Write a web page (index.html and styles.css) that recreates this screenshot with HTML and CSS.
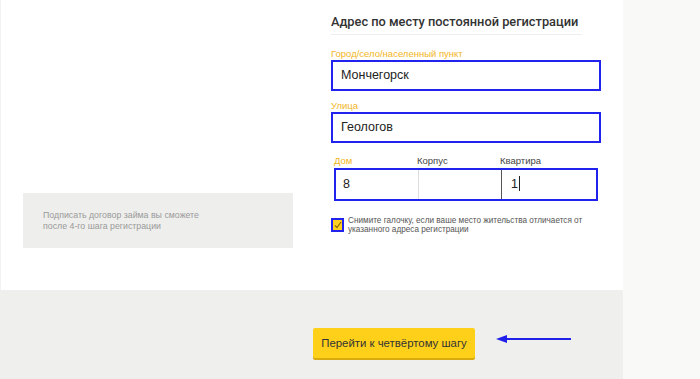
FILE: index.html
```html
<!DOCTYPE html>
<html lang="ru">
<head>
  <meta charset="UTF-8">
  <meta name="viewport" content="width=device-width, initial-scale=1.0">
  <title>Регистрация — шаг 3</title>
  <link rel="stylesheet" href="styles.css">
</head>
<body>
  <div class="page">
    <div class="main">
      <div class="card">
        <div class="side">
          <div class="note">
            Подписать договор займа вы сможете<br>
            после 4-го шага регистрации
          </div>
        </div>

        <div class="form">
          <h2>Адрес по месту постоянной регистрации</h2>

          <label class="lbl active">Город/село/населенный пункт</label>
          <div class="field">Мончегорск</div>

          <label class="lbl active">Улица</label>
          <div class="field">Геологов</div>

          <div class="triple-labels">
            <span class="lbl active">Дом</span>
            <span class="lbl">Корпус</span>
            <span class="lbl">Квартира</span>
          </div>
          <div class="triple">
            <div class="cell">8</div>
            <div class="cell"></div>
            <div class="cell">1<span class="caret"></span></div>
          </div>

          <div class="check-row">
            <span class="check">
              <svg width="8" height="8" viewBox="0 0 8 8"><path d="M1 4.5 L3 6.5 L7 1" fill="none" stroke="#8a6a00" stroke-width="1.2"/></svg>
            </span>
            <span class="check-text">Снимите галочку, если ваше место жительства отличается от указанного адреса регистрации</span>
          </div>
        </div>
      </div>

      <div class="footer">
        <button class="next">Перейти к четвёртому шагу</button>
        <svg class="arrow" width="78" height="10" viewBox="0 0 78 10">
          <path d="M10 5 H76" stroke="#2020e8" stroke-width="2"/>
          <path d="M1 5 L12 1 L12 9 Z" fill="#2020e8"/>
        </svg>
      </div>
    </div>
    <div class="aside"></div>
  </div>
</body>
</html>
```

FILE: styles.css
```css
* {
  box-sizing: border-box;
}
body {
  margin: 0;
  font-family: 'Liberation Sans', Arial, sans-serif;
  color: #333;
  background: #f9f9f8;
}
.page {
  display: flex;
  height: 379px;
}
.main {
  width: 623px;
  display: flex;
  flex-direction: column;
}
.aside {
  flex: 1;
  background: #f9f9f8;
}
.card {
  height: 290px;
  background: #fff;
  border-left: 1px solid #f3f3f3;
  display: flex;
}
.side {
  width: 330px;
  padding: 193px 0 0 22px;
}
.note {
  width: 270px;
  height: 55px;
  background: #eeeeec;
  color: #9a9a9a;
  font-size: 8.8px;
  line-height: 11px;
  padding: 17px 0 0 20px;
}
.form {
  width: 270px;
  padding-top: 13px;
}
h2 {
  margin: 0;
  font-family: Roboto, 'Liberation Sans', sans-serif;
  font-size: 12.8px;
  font-weight: 500;
  line-height: 18px;
  color: #333;
  padding-bottom: 3px;
  border-bottom: 1px solid #eeeeee;
  width: 251px;
  white-space: nowrap;
}
.lbl {
  display: block;
  font-size: 9.5px;
  line-height: 11px;
  font-weight: normal;
  color: #444;
}
.lbl.active {
  color: #f2b51c;
}
h2 + .lbl {
  margin-top: 13px;
}
.field {
  height: 31px;
  border: 2px solid #2222ee;
  margin-top: 1px;
  font-size: 12.5px;
  line-height: 27px;
  padding-left: 8px;
  color: #222;
}
.field + .lbl {
  margin-top: 9px;
}
.triple-labels {
  display: flex;
  margin-top: 12px;
  padding-left: 3px;
}
.triple-labels .lbl {
  width: 83px;
}
.triple {
  display: flex;
  height: 33px;
  margin: 2px 3px 0 3px;
  border: 2px solid #2222ee;
}
.cell {
  width: 83px;
  font-size: 12.5px;
  line-height: 29px;
  padding-left: 7px;
  color: #222;
  border-right: 1px solid #ddd;
}
.cell:nth-child(2) {
  border-right-color: #555;
}
.cell:last-child {
  flex: 1;
  border-right: none;
  padding-left: 9px;
}
.caret {
  display: inline-block;
  width: 1px;
  height: 15px;
  background: #222;
  vertical-align: -3px;
  margin-left: 1px;
}
.check-row {
  display: flex;
  align-items: flex-start;
  margin-top: 15px;
}
.check {
  width: 13px;
  height: 14px;
  border: 2px solid #2222ee;
  background: #ffd01f;
  margin-top: 2px;
  display: flex;
  align-items: center;
  justify-content: center;
  flex-shrink: 0;
}
.check-text {
  font-size: 8.2px;
  line-height: 9px;
  color: #555;
  margin-left: 4px;
  width: 240px;
}
.footer {
  flex: 1;
  background: #efefee;
  display: flex;
  align-items: flex-start;
  padding: 38px 0 0 313px;
}
.next {
  width: 162px;
  height: 30px;
  border: none;
  border-radius: 2px;
  background: #ffd01a;
  box-shadow: 0 2px 0 #d9ab0e;
  font-family: 'Liberation Sans', Arial, sans-serif;
  font-size: 11.4px;
  color: #333;
  padding: 0;
  cursor: pointer;
}
.arrow {
  margin: 6px 0 0 20px;
}
```
